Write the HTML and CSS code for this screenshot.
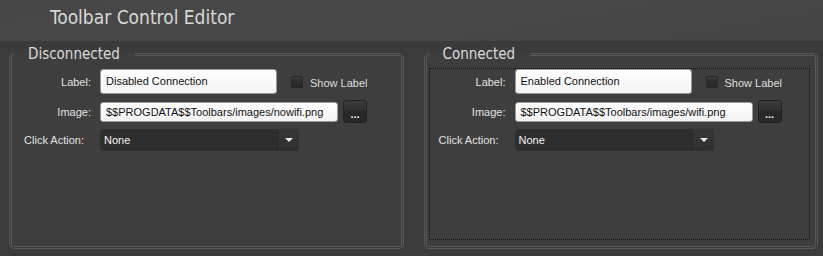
FILE: index.html
```html
<!DOCTYPE html>
<html lang="en">
<head>
    <meta charset="UTF-8">
    <meta name="viewport" content="width=device-width, initial-scale=1.0">
    <title>Toolbar Control Editor</title>
    <link rel="stylesheet" href="styles.css">
</head>
<body>

    <div class="header">
        <h1>Toolbar Control Editor</h1>
    </div>

    <div class="panels">
        <fieldset class="group">
            <legend>Disconnected</legend>
            <div class="group-body">
                <div class="row row-label">
                    <span class="field-label">Label:</span>
                    <div class="text-box">Disabled Connection</div>
                    <span class="check"></span>
                    <span class="check-text">Show Label</span>
                </div>
                <div class="row">
                    <span class="field-label">Image:</span>
                    <div class="text-box image-box">$$PROGDATA$$Toolbars/images/nowifi.png</div>
                    <button class="browse-btn">...</button>
                </div>
                <div class="row">
                    <span class="field-label action-label">Click Action:</span>
                    <div class="combo">
                        <span class="combo-value">None</span>
                        <span class="combo-arrow"></span>
                    </div>
                </div>
            </div>
        </fieldset>

        <fieldset class="group">
            <legend>Connected</legend>
            <div class="group-body focused">
                <div class="row row-label">
                    <span class="field-label">Label:</span>
                    <div class="text-box">Enabled Connection</div>
                    <span class="check"></span>
                    <span class="check-text">Show Label</span>
                </div>
                <div class="row">
                    <span class="field-label">Image:</span>
                    <div class="text-box image-box">$$PROGDATA$$Toolbars/images/wifi.png</div>
                    <button class="browse-btn">...</button>
                </div>
                <div class="row">
                    <span class="field-label action-label">Click Action:</span>
                    <div class="combo">
                        <span class="combo-value">None</span>
                        <span class="combo-arrow"></span>
                    </div>
                </div>
            </div>
        </fieldset>
    </div>

</body>
</html>
```

FILE: styles.css
```css
body {
    margin: 0;
    background: #3b3b3b;
    font-family: 'Liberation Sans', Arial, sans-serif;
    font-size: 11px;
    color: #dedede;
    height: 256px;
    overflow: hidden;
}
.header {
    height: 41px;
    background: linear-gradient(170deg, #474747 0%, #484848 55%, #444444 100%);
    padding-left: 50px;
}
h1 {
    margin: 0;
    padding-top: 5px;
    font-family: 'DejaVu Sans Condensed', 'DejaVu Sans', sans-serif;
    font-weight: normal;
    font-size: 19px;
    line-height: 24px;
    letter-spacing: 0;
    color: #d8d8d8;
}
.panels {
    display: grid;
    grid-template-columns: 1fr 1fr;
    gap: 20px;
    padding: 4px 5px 0 9px;
}
.group {
    margin: 0;
    padding: 5px 5px 6px 2px;
    border: 3px double #585858;
    border-radius: 5px;
    background: #3e3e3e;
    min-width: 0;
}
legend {
    padding: 0 15px 0 14px;
    font-family: 'DejaVu Sans Condensed', 'DejaVu Sans', sans-serif;
    font-size: 15px;
    line-height: 18px;
    color: #dadada;
}
.group-body {
    height: 170px;
    border: 1px dotted transparent;
    display: flex;
    flex-direction: column;
    gap: 6px;
}
.group-body.focused {
    border-color: #111;
}
.row {
    display: flex;
    align-items: center;
}
.field-label {
    width: 76px;
    margin-right: 9px;
    text-align: right;
    color: #e2e2e2;
}
.action-label {
    width: 69px;
    margin-right: 16px;
    white-space: nowrap;
}
.text-box {
    box-sizing: border-box;
    width: 177px;
    height: 25px;
    padding: 4px 5px;
    background: linear-gradient(#ffffff, #f2f2f2);
    border: 1px solid #9a9a9a;
    border-radius: 3px;
    color: #111;
    line-height: 14px;
    white-space: nowrap;
    overflow: hidden;
}
.image-box {
    width: 238px;
    height: 20px;
    padding: 2px 5px;
}
.check {
    box-sizing: border-box;
    width: 12px;
    height: 12px;
    margin: 0 7px 0 14px;
    border: 1px solid #262626;
    border-radius: 2px;
    background: linear-gradient(#3a3a3a, #2e2e2e 50%, #262626);
}
.row-label .check-text {
    padding-top: 2px;
}
.browse-btn {
    box-sizing: border-box;
    width: 24px;
    height: 23px;
    margin-left: 5px;
    padding: 4px 0 0;
    border: 1px solid #222;
    border-radius: 3px;
    background: linear-gradient(#3c3c3c, #303030 45%, #272727 50%, #2a2a2a);
    color: #f0f0f0;
    font-family: 'Liberation Sans', Arial, sans-serif;
    font-size: 11px;
    font-weight: bold;
    line-height: 14px;
}
.combo {
    display: flex;
    box-sizing: border-box;
    width: 199px;
    height: 22px;
    border-radius: 4px;
    background: #2e2e2e;
    overflow: hidden;
}
.combo-value {
    flex: 1;
    padding: 5px 0 0 4px;
    color: #f4f4f4;
    font-size: 11px;
}
.combo-arrow {
    width: 21px;
    background: linear-gradient(#363636, #303030);
    border-left: 1px solid #2a2a2a;
    position: relative;
}
.combo-arrow::after {
    content: "";
    position: absolute;
    left: 7px;
    top: 9px;
    border-left: 4px solid transparent;
    border-right: 4px solid transparent;
    border-top: 4px solid #e8e8e8;
}
```
